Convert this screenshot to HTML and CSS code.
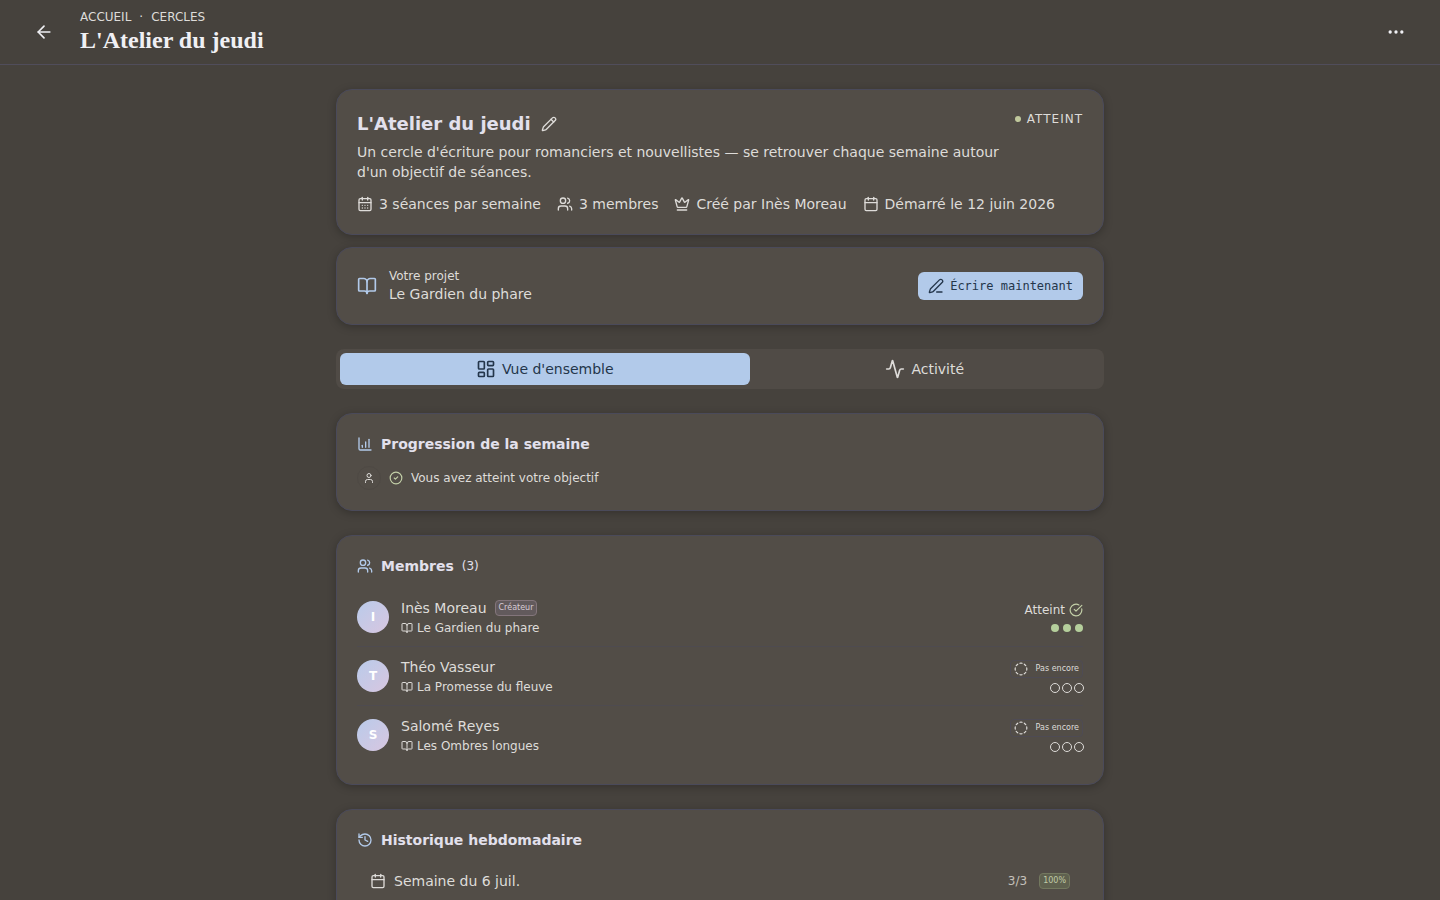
FILE: index.html
```html
<!DOCTYPE html>
<html lang="fr">
<head>
    <meta charset="UTF-8">
    <meta name="viewport" content="width=device-width, initial-scale=1.0">
    <title>L'Atelier du jeudi</title>
    <link rel="stylesheet" href="styles.css">
</head>
<body>
    <svg class="sprite" aria-hidden="true">
        <symbol id="arrow-left" viewBox="0 0 24 24"><path d="m12 19-7-7 7-7"/><path d="M19 12H5"/></symbol>
        <symbol id="ellipsis" viewBox="0 0 24 24"><circle cx="12" cy="12" r="1"/><circle cx="19" cy="12" r="1"/><circle cx="5" cy="12" r="1"/></symbol>
        <symbol id="pencil" viewBox="0 0 24 24"><path d="M21.174 6.812a1 1 0 0 0-3.986-3.987L3.842 16.174a2 2 0 0 0-.5.83l-1.321 4.352a.5.5 0 0 0 .623.622l4.353-1.32a2 2 0 0 0 .83-.497z"/><path d="m15 5 4 4"/></symbol>
        <symbol id="pen-line" viewBox="0 0 24 24"><path d="M13 21h8"/><path d="M21.174 6.812a1 1 0 0 0-3.986-3.987L3.842 16.174a2 2 0 0 0-.5.83l-1.321 4.352a.5.5 0 0 0 .623.622l4.353-1.32a2 2 0 0 0 .83-.497z"/></symbol>
        <symbol id="calendar" viewBox="0 0 24 24"><path d="M8 2v4"/><path d="M16 2v4"/><rect width="18" height="18" x="3" y="4" rx="2"/><path d="M3 10h18"/></symbol>
        <symbol id="calendar-days" viewBox="0 0 24 24"><path d="M8 2v4"/><path d="M16 2v4"/><rect width="18" height="18" x="3" y="4" rx="2"/><path d="M3 10h18"/><path d="M8 14h.01"/><path d="M12 14h.01"/><path d="M16 14h.01"/><path d="M8 18h.01"/><path d="M12 18h.01"/><path d="M16 18h.01"/></symbol>
        <symbol id="users" viewBox="0 0 24 24"><path d="M16 21v-2a4 4 0 0 0-4-4H6a4 4 0 0 0-4 4v2"/><circle cx="9" cy="7" r="4"/><path d="M22 21v-2a4 4 0 0 0-3-3.87"/><path d="M16 3.13a4 4 0 0 1 0 7.75"/></symbol>
        <symbol id="user" viewBox="0 0 24 24"><path d="M19 21v-2a4 4 0 0 0-4-4H9a4 4 0 0 0-4 4v2"/><circle cx="12" cy="7" r="4"/></symbol>
        <symbol id="crown" viewBox="0 0 24 24"><path d="M11.562 3.266a.5.5 0 0 1 .876 0L15.39 8.87a1 1 0 0 0 1.516.294L21.183 5.5a.5.5 0 0 1 .798.519l-2.834 10.246a1 1 0 0 1-.956.734H5.81a1 1 0 0 1-.957-.734L2.02 6.02a.5.5 0 0 1 .798-.519l4.276 3.664a1 1 0 0 0 1.516-.294z"/><path d="M5 21h14"/></symbol>
        <symbol id="book-open" viewBox="0 0 24 24"><path d="M12 7v14"/><path d="M3 18a1 1 0 0 1-1-1V4a1 1 0 0 1 1-1h5a4 4 0 0 1 4 4 4 4 0 0 1 4-4h5a1 1 0 0 1 1 1v13a1 1 0 0 1-1 1h-6a3 3 0 0 0-3 3 3 3 0 0 0-3-3z"/></symbol>
        <symbol id="dashboard" viewBox="0 0 24 24"><rect width="7" height="9" x="3" y="3" rx="1"/><rect width="7" height="5" x="14" y="3" rx="1"/><rect width="7" height="9" x="14" y="12" rx="1"/><rect width="7" height="5" x="3" y="16" rx="1"/></symbol>
        <symbol id="activity" viewBox="0 0 24 24"><path d="M22 12h-2.48a2 2 0 0 0-1.93 1.46l-2.35 8.36a.25.25 0 0 1-.48 0L9.24 2.18a.25.25 0 0 0-.48 0l-2.35 8.36A2 2 0 0 1 4.49 12H2"/></symbol>
        <symbol id="chart" viewBox="0 0 24 24"><path d="M3 3v16a2 2 0 0 0 2 2h16"/><path d="M13 17V9"/><path d="M18 17V5"/><path d="M8 17v-3"/></symbol>
        <symbol id="circle-check" viewBox="0 0 24 24"><circle cx="12" cy="12" r="10"/><path d="m9 12 2 2 4-4"/></symbol>
        <symbol id="circle-check-big" viewBox="0 0 24 24"><path d="M21.801 10A10 10 0 1 1 17 3.335"/><path d="m9 11 3 3L22 4"/></symbol>
        <symbol id="circle-dashed" viewBox="0 0 24 24"><path d="M10.1 2.182a10 10 0 0 1 3.8 0"/><path d="M13.9 21.818a10 10 0 0 1-3.8 0"/><path d="M17.609 3.721a10 10 0 0 1 2.69 2.7"/><path d="M2.182 13.9a10 10 0 0 1 0-3.8"/><path d="M20.279 17.609a10 10 0 0 1-2.7 2.69"/><path d="M21.818 10.1a10 10 0 0 1 0 3.8"/><path d="M3.721 6.391a10 10 0 0 1 2.7-2.69"/><path d="M6.391 20.279a10 10 0 0 1-2.69-2.7"/></symbol>
        <symbol id="history" viewBox="0 0 24 24"><path d="M3 12a9 9 0 1 0 9-9 9.75 9.75 0 0 0-6.74 2.74L3 8"/><path d="M3 3v5h5"/><path d="M12 7v5l4 2"/></symbol>
    </svg>

    <header class="topbar">
        <button class="icon-button" type="button" aria-label="Retour"><svg class="icon icon-lg"><use href="#arrow-left"/></svg></button>
        <div class="topbar-titles">
            <nav class="breadcrumb">
                <a href="#">Accueil</a>
                <span>·</span>
                <a href="#">Cercles</a>
            </nav>
            <h1>L'Atelier du jeudi</h1>
        </div>
        <button class="icon-button" type="button" aria-label="Plus d'options"><svg class="icon icon-lg"><use href="#ellipsis"/></svg></button>
    </header>

    <main class="content">
        <div class="intro">
            <section class="card">
                <div class="circle-head">
                    <div class="circle-text">
                        <div class="circle-name">
                            <h2>L'Atelier du jeudi</h2>
                            <button class="edit-button" type="button" aria-label="Modifier"><svg class="icon"><use href="#pencil"/></svg></button>
                        </div>
                        <p>Un cercle d'écriture pour romanciers et nouvellistes — se retrouver chaque semaine autour d'un objectif de séances.</p>
                    </div>
                    <span class="status">Atteint</span>
                </div>
                <ul class="meta">
                    <li><svg class="icon"><use href="#calendar-days"/></svg>3 séances par semaine</li>
                    <li><svg class="icon"><use href="#users"/></svg>3 membres</li>
                    <li><svg class="icon"><use href="#crown"/></svg>Créé par Inès Moreau</li>
                    <li><svg class="icon"><use href="#calendar"/></svg>Démarré le 12 juin 2026</li>
                </ul>
            </section>

            <section class="card project">
                <svg class="icon icon-lg icon-accent"><use href="#book-open"/></svg>
                <div class="project-text">
                    <div class="project-label">Votre projet</div>
                    <div>Le Gardien du phare</div>
                </div>
                <button class="write-button" type="button"><svg class="icon"><use href="#pen-line"/></svg>Écrire maintenant</button>
            </section>
        </div>

        <div class="tabs" role="tablist">
            <button class="tab active" type="button" role="tab" aria-selected="true"><svg class="icon icon-lg"><use href="#dashboard"/></svg>Vue d'ensemble</button>
            <button class="tab" type="button" role="tab" aria-selected="false"><svg class="icon icon-lg"><use href="#activity"/></svg>Activité</button>
        </div>

        <section class="card">
            <h3 class="card-title"><svg class="icon icon-accent"><use href="#chart"/></svg>Progression de la semaine</h3>
            <div class="progress">
                <span class="progress-user"><svg class="icon icon-xs"><use href="#user"/></svg></span>
                <svg class="icon icon-sm icon-success"><use href="#circle-check"/></svg>
                <span>Vous avez atteint votre objectif</span>
            </div>
        </section>

        <section class="card">
            <h3 class="card-title"><svg class="icon icon-accent"><use href="#users"/></svg>Membres <span class="count">(3)</span></h3>
            <ul class="members">
                <li class="member">
                    <span class="avatar">I</span>
                    <div class="member-text">
                        <div class="member-name">Inès Moreau <span class="badge badge-creator">Créateur</span></div>
                        <div class="member-project"><svg class="icon icon-xs"><use href="#book-open"/></svg>Le Gardien du phare</div>
                    </div>
                    <div class="member-status">
                        <span class="done">Atteint <svg class="icon icon-sm icon-success"><use href="#circle-check-big"/></svg></span>
                        <span class="dots"><i class="dot filled"></i><i class="dot filled"></i><i class="dot filled"></i></span>
                    </div>
                </li>
                <li class="member">
                    <span class="avatar">T</span>
                    <div class="member-text">
                        <div class="member-name">Théo Vasseur</div>
                        <div class="member-project"><svg class="icon icon-xs"><use href="#book-open"/></svg>La Promesse du fleuve</div>
                    </div>
                    <div class="member-status">
                        <span class="pending"><svg class="icon icon-sm"><use href="#circle-dashed"/></svg>Pas encore</span>
                        <span class="dots"><i class="dot"></i><i class="dot"></i><i class="dot"></i></span>
                    </div>
                </li>
                <li class="member">
                    <span class="avatar">S</span>
                    <div class="member-text">
                        <div class="member-name">Salomé Reyes</div>
                        <div class="member-project"><svg class="icon icon-xs"><use href="#book-open"/></svg>Les Ombres longues</div>
                    </div>
                    <div class="member-status">
                        <span class="pending"><svg class="icon icon-sm"><use href="#circle-dashed"/></svg>Pas encore</span>
                        <span class="dots"><i class="dot"></i><i class="dot"></i><i class="dot"></i></span>
                    </div>
                </li>
            </ul>
        </section>

        <section class="card">
            <h3 class="card-title"><svg class="icon icon-accent"><use href="#history"/></svg>Historique hebdomadaire</h3>
            <div class="week">
                <svg class="icon"><use href="#calendar"/></svg>
                <span class="week-name">Semaine du 6 juil.</span>
                <span class="week-score">3/3</span>
                <span class="badge badge-success">100%</span>
            </div>
        </section>
    </main>
</body>
</html>
```
FILE: styles.css
```css
:root {
    --bg: #46423d;
    --card: #524d47;
    --border: #4a4a5a;
    --text: #dedcd9;
    --heading: #e2e0ec;
    --accent: #b2caea;
    --accent-text: #24364b;
    --success: #b5cf9c;
}
* {
    box-sizing: border-box;
}
body {
    margin: 0;
    background: var(--bg);
    color: var(--text);
    font-family: "DejaVu Sans", sans-serif;
    font-size: 14px;
    line-height: 20px;
}
h1, h2, h3, p, ul {
    margin: 0;
    padding: 0;
}
ul {
    list-style: none;
}
button {
    border: none;
    background: none;
    color: inherit;
    font: inherit;
    padding: 0;
    cursor: pointer;
}
.sprite {
    display: none;
}
.icon {
    width: 16px;
    height: 16px;
    flex: none;
    fill: none;
    stroke: currentColor;
    stroke-width: 2;
    stroke-linecap: round;
    stroke-linejoin: round;
}
.icon-lg {
    width: 20px;
    height: 20px;
}
.icon-sm {
    width: 14px;
    height: 14px;
}
.icon-xs {
    width: 12px;
    height: 12px;
}
.icon-accent {
    color: var(--accent);
}
.icon-success {
    color: #c3d0a8;
}

/* Header */
.topbar {
    display: flex;
    align-items: center;
    gap: 16px;
    padding: 9px 24px;
    border-bottom: 1px solid #504d5b;
}
.topbar-titles {
    flex: 1;
}
.breadcrumb {
    display: flex;
    gap: 8px;
    font-size: 12px;
    line-height: 16px;
    text-transform: uppercase;
}
.breadcrumb a {
    color: inherit;
    text-decoration: none;
}
h1 {
    color: #f0f0f4;
    font-family: "Liberation Serif", serif;
    font-size: 24px;
    line-height: 30px;
}
.icon-button {
    display: flex;
    align-items: center;
    justify-content: center;
    width: 40px;
    height: 40px;
    color: #f0f0f4;
}

/* Layout */
.content {
    display: flex;
    flex-direction: column;
    gap: 24px;
    max-width: 816px;
    margin: 0 auto;
    padding: 24px;
}
.intro {
    display: flex;
    flex-direction: column;
    gap: 12px;
}
.card {
    padding: 20px;
    background: var(--card);
    border: 1px solid var(--border);
    border-radius: 16px;
    box-shadow: 0 2px 8px rgba(0, 0, 0, 0.25);
}
.card-title {
    display: flex;
    align-items: center;
    gap: 8px;
    margin-bottom: 12px;
    color: var(--heading);
    font-size: 14px;
    line-height: 20px;
}
.count {
    font-size: 12px;
    font-weight: normal;
}

/* Circle summary */
.circle-head {
    display: flex;
    align-items: flex-start;
    gap: 12px;
}
.circle-text {
    flex: 1;
}
.circle-name {
    display: flex;
    align-items: center;
    gap: 4px;
    height: 28px;
    margin-bottom: 4px;
}
h2 {
    color: var(--heading);
    font-size: 18px;
    line-height: 28px;
}
.edit-button {
    display: flex;
    padding: 6px;
}
.status {
    display: flex;
    align-items: center;
    gap: 6px;
    font-size: 12px;
    line-height: 18px;
    letter-spacing: 1px;
    text-transform: uppercase;
}
.status::before {
    content: "";
    width: 6px;
    height: 6px;
    border-radius: 50%;
    background: #c0c89c;
}
.meta {
    display: flex;
    flex-wrap: wrap;
    gap: 16px;
    margin-top: 12px;
}
.meta li {
    display: flex;
    align-items: center;
    gap: 6px;
}

/* Project */
.project {
    display: flex;
    align-items: center;
    gap: 12px;
}
.project-text {
    flex: 1;
}
.project-label {
    font-size: 12px;
    line-height: 16px;
}
.write-button {
    display: flex;
    align-items: center;
    gap: 6px;
    padding: 6px 10px;
    border-radius: 6px;
    background: var(--accent);
    color: var(--accent-text);
    font-family: "DejaVu Sans Mono", monospace;
    font-size: 12px;
    line-height: 16px;
}

/* Tabs */
.tabs {
    display: flex;
    padding: 4px;
    border-radius: 8px;
    background: #504b46;
}
.tab {
    display: flex;
    flex: 1 1 auto;
    align-items: center;
    justify-content: center;
    gap: 6px;
    padding: 6px 12px;
    border-radius: 6px;
}
.tab.active {
    background: var(--accent);
    color: var(--accent-text);
}

/* Week progress */
.progress {
    display: flex;
    align-items: center;
    gap: 8px;
    font-size: 12px;
}
.progress-user {
    display: flex;
    align-items: center;
    justify-content: center;
    width: 24px;
    height: 24px;
    border: 1px solid #4e4944;
    border-radius: 50%;
}

/* Members */
.member {
    display: flex;
    align-items: center;
    gap: 12px;
    padding: 10px 0;
}
.member + .member {
    border-top: 1px solid #4e4b50;
}
.avatar {
    width: 32px;
    height: 32px;
    border-radius: 50%;
    background: linear-gradient(135deg, #b9cbea, #d8c6e0);
    color: #fff;
    font-size: 12px;
    font-weight: bold;
    line-height: 32px;
    text-align: center;
}
.member-text {
    flex: 1;
}
.member-name {
    display: flex;
    align-items: center;
    gap: 8px;
}
.member-project {
    display: flex;
    align-items: center;
    gap: 4px;
    margin-top: 2px;
    font-size: 12px;
    line-height: 16px;
}
.member-status {
    display: flex;
    flex-direction: column;
    align-items: flex-end;
    gap: 6px;
}
.done {
    display: flex;
    align-items: center;
    gap: 4px;
    font-size: 12px;
    line-height: 16px;
}
.pending {
    display: flex;
    align-items: center;
    gap: 8px;
    padding: 0 3px;
    border: 1px solid #4e4b54;
    border-radius: 4px;
    font-size: 8px;
    line-height: 16px;
}
.dots {
    display: flex;
    gap: 4px;
}
.dot {
    width: 8px;
    height: 8px;
    border-radius: 50%;
    outline: 1px solid var(--text);
}
.dot.filled {
    background: var(--success);
    outline: none;
}
.badge {
    padding: 0 3px;
    border: 1px solid;
    border-radius: 4px;
    font-size: 8px;
    line-height: 14px;
}
.badge-creator {
    border-color: #83757b;
    background: #625a5c;
    color: #d8ccd6;
}
.badge-success {
    border-color: #73785f;
    background: #5f614f;
    color: #c0cba8;
}

/* History */
.week {
    display: flex;
    align-items: center;
    gap: 8px;
    padding: 9px 13px;
}
.week-name {
    flex: 1;
}
.week-score {
    margin-right: 4px;
    color: #c4c0ba;
    font-size: 12px;
}
```
